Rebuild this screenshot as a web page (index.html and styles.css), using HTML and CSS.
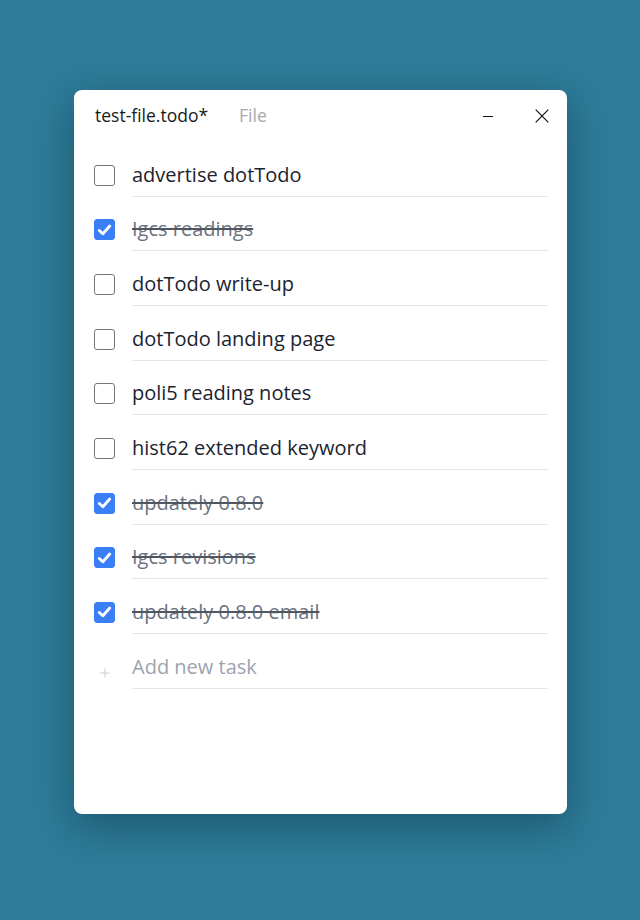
FILE: index.html
```
<!DOCTYPE html>
<html>
<head>
<meta charset="utf-8">
<link rel="stylesheet" href="styles.css">
</head>
<body>
<div class="window">
  <header class="titlebar">
    <div class="tabs">
      <span class="filename">test-file.todo*</span>
      <span class="menu">File</span>
    </div>
    <div class="controls">
      <svg class="ctl min" width="10" height="14" viewBox="0 0 10 14"><line x1="0" y1="7.5" x2="10" y2="7.5" stroke="#111" stroke-width="1"/></svg>
      <svg class="ctl close" width="14" height="14" viewBox="0 0 14 14"><path d="M0.7 0.7 L13.3 13.3 M13.3 0.7 L0.7 13.3" stroke="#111" stroke-width="1.2" fill="none"/></svg>
    </div>
  </header>
  <ul class="tasks">
    <li class="task"><span class="box"></span><span class="label">advertise dotTodo</span></li>
    <li class="task done"><span class="box"><svg viewBox="0 0 20 20" width="20" height="20"><path d="M4.5 10.5 L8.3 14 L15.5 5.8" stroke="#fff" stroke-width="3" fill="none" stroke-linecap="round" stroke-linejoin="round"/></svg></span><span class="label">Igcs readings</span></li>
    <li class="task"><span class="box"></span><span class="label">dotTodo write-up</span></li>
    <li class="task"><span class="box"></span><span class="label">dotTodo landing page</span></li>
    <li class="task"><span class="box"></span><span class="label">poli5 reading notes</span></li>
    <li class="task"><span class="box"></span><span class="label">hist62 extended keyword</span></li>
    <li class="task done"><span class="box"><svg viewBox="0 0 20 20" width="20" height="20"><path d="M4.5 10.5 L8.3 14 L15.5 5.8" stroke="#fff" stroke-width="3" fill="none" stroke-linecap="round" stroke-linejoin="round"/></svg></span><span class="label">updately 0.8.0</span></li>
    <li class="task done"><span class="box"><svg viewBox="0 0 20 20" width="20" height="20"><path d="M4.5 10.5 L8.3 14 L15.5 5.8" stroke="#fff" stroke-width="3" fill="none" stroke-linecap="round" stroke-linejoin="round"/></svg></span><span class="label">Igcs revisions</span></li>
    <li class="task done"><span class="box"><svg viewBox="0 0 20 20" width="20" height="20"><path d="M4.5 10.5 L8.3 14 L15.5 5.8" stroke="#fff" stroke-width="3" fill="none" stroke-linecap="round" stroke-linejoin="round"/></svg></span><span class="label">updately 0.8.0 email</span></li>
    <li class="task add"><span class="plus"><svg viewBox="0 0 10 10" width="10" height="10"><path d="M5 0.5 V9.5 M0.5 5 H9.5" stroke="#c9cdd3" stroke-width="1" fill="none"/></svg></span><span class="label">Add new task</span></li>
  </ul>
</div>
</body>
</html>
```
FILE: styles.css
```
* { box-sizing: border-box; }
html, body { margin: 0; padding: 0; }
body {
  background: #2d7c99;
  width: 640px;
  height: 920px;
  overflow: hidden;
  font-family: "Open Sans", "Noto Sans", sans-serif;
  padding-top: 90px;
}
.window {
  width: 493px;
  height: 724px;
  margin-left: 74px;
  background: #fff;
  border-radius: 8px;
  box-shadow: 0 12px 40px rgba(10, 40, 60, 0.45);
  padding: 0 19px 0 20px;
}
.titlebar {
  height: 52px;
  display: flex;
  justify-content: space-between;
  align-items: flex-start;
  padding-top: 13px;
}
.tabs { display: flex; gap: 31px; padding-left: 1px; }
.filename { font-size: 17.5px; line-height: 24px; color: #1a1a1a; }
.menu { font-size: 17.5px; line-height: 24px; color: #a3a9b3; }
.controls { display: flex; align-items: center; gap: 42px; height: 26px; margin-right: -1px; }
.ctl { display: block; }
.tasks { list-style: none; margin: 0; padding: 0; }
.task {
  display: flex;
  align-items: flex-end;
  height: 54.67px;
}
.box {
  flex: none;
  width: 21px;
  height: 21px;
  border: 1.5px solid #767676;
  border-radius: 3px;
  margin-right: 17px;
  margin-bottom: 11px;
  display: flex;
  align-items: center;
  justify-content: center;
}
.done .box {
  background: #3b7ff6;
  border-color: #3b7ff6;
}
.box svg { display: block; }
.label {
  flex: 1;
  height: 100%;
  display: flex;
  align-items: flex-end;
  padding-bottom: 8px;
  font-size: 20px;
  line-height: 26px;
  color: #1c2330;
  border-bottom: 1px solid #e3e5e8;
}
.done .label {
  color: #6b7280;
  text-decoration: line-through;
  text-decoration-thickness: 2px;
  text-decoration-color: #50565f;
}
.plus {
  flex: none;
  width: 21px;
  margin-right: 17px;
  margin-bottom: 11px;
  display: flex;
  justify-content: center;
  padding-left: 1px;
}
.plus svg { display: block; }
.add .label { color: #9ca3af; }
```
